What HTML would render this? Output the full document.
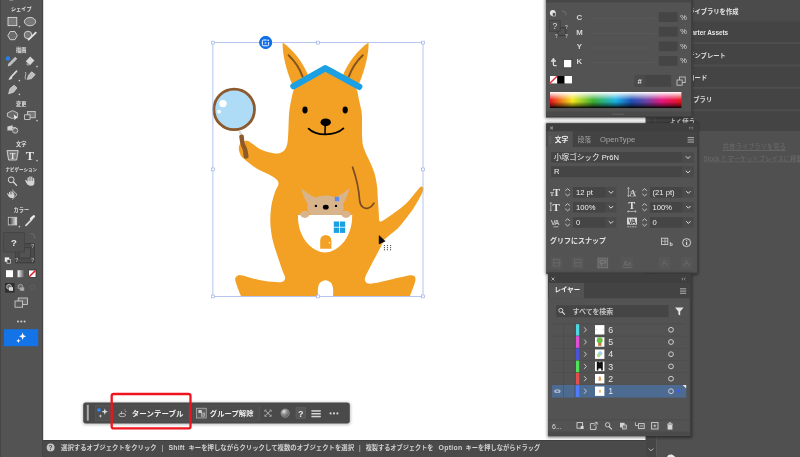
<!DOCTYPE html>
<html lang="ja">
<head>
<meta charset="utf-8">
<title>Illustrator</title>
<style>
html,body{margin:0;padding:0;background:#fff;overflow:hidden}
body{width:800px;height:457px;position:relative;font-family:"Liberation Sans","Noto Sans CJK JP",sans-serif}
svg{position:absolute;left:0;top:0;display:block;will-change:transform}
text{font-family:"Liberation Sans","Noto Sans CJK JP",sans-serif}
.ser{font-family:"Liberation Serif","Noto Serif CJK SC",serif}
</style>
</head>
<body>
<svg width="800" height="457" viewBox="0 0 800 457">
<defs>
<linearGradient id="spec" x1="0" y1="0" x2="1" y2="0">
<stop offset="0" stop-color="#e8141c"/>
<stop offset="0.17" stop-color="#f5e81c"/>
<stop offset="0.33" stop-color="#3bb035"/>
<stop offset="0.5" stop-color="#19b3e6"/>
<stop offset="0.62" stop-color="#1c4fb5"/>
<stop offset="0.73" stop-color="#6a44a8"/>
<stop offset="0.85" stop-color="#e6157d"/>
<stop offset="1" stop-color="#e8141c"/>
</linearGradient>
<linearGradient id="specv" x1="0" y1="0" x2="0" y2="1">
<stop offset="0" stop-color="#fff" stop-opacity="1"/>
<stop offset="0.5" stop-color="#fff" stop-opacity="0"/>
<stop offset="0.6" stop-color="#000" stop-opacity="0"/>
<stop offset="0.85" stop-color="#000" stop-opacity="0.5"/>
<stop offset="1" stop-color="#000" stop-opacity="1"/>
</linearGradient>
<linearGradient id="gradsw" x1="0" y1="0" x2="1" y2="0">
<stop offset="0" stop-color="#222"/><stop offset="1" stop-color="#eee"/>
</linearGradient>
<linearGradient id="gradsw2" x1="0" y1="0" x2="1" y2="0">
<stop offset="0" stop-color="#fff"/><stop offset="1" stop-color="#555"/>
</linearGradient>
<radialGradient id="globe" cx="0.35" cy="0.3" r="0.75"><stop offset="0" stop-color="#e0e0e0"/><stop offset="0.5" stop-color="#8c8c8c"/><stop offset="1" stop-color="#5a5a5a"/></radialGradient>
<filter id="sh" x="-10%" y="-10%" width="120%" height="125%">
<feGaussianBlur stdDeviation="1.6"/>
</filter>
</defs>

<!-- ============ CANVAS ============ -->
<rect x="0" y="0" width="800" height="457" fill="#ffffff"/>

<!-- ============ LIBRARIES PANEL (right, behind) ============ -->
<g id="libs">
<rect x="645.5" y="0" width="11" height="457" fill="#4d4d4d"/>
<rect x="656" y="0" width="144" height="457" fill="#505050"/>
<rect x="656" y="0" width="144" height="131" fill="#444444"/>
<rect x="656" y="0" width="144" height="21.6" fill="#4b4b4b"/>
<rect x="656" y="42.2" width="144" height="1.8" fill="#4e4e4e"/>
<rect x="656" y="64.6" width="144" height="1.8" fill="#4e4e4e"/>
<rect x="656" y="87.0" width="144" height="1.8" fill="#4e4e4e"/>
<rect x="656" y="109.4" width="144" height="1.8" fill="#4e4e4e"/>
<text x="738.5" y="13.6" font-size="6.3" fill="#e6e6e6" font-weight="700" text-anchor="end">ライブラリを作成</text>
<text x="728.2" y="35.4" font-size="6.4" fill="#e6e6e6" font-weight="700" text-anchor="end">Starter Assets</text>
<text x="725.8" y="57.6" font-size="6.3" fill="#dcdcdc" font-weight="700" text-anchor="end">テンプレート</text>
<text x="707.2" y="80.0" font-size="6.3" fill="#dcdcdc" font-weight="700" text-anchor="end">コード</text>
<text x="712.2" y="102.4" font-size="6.3" fill="#dcdcdc" font-weight="700" text-anchor="end">ライブラリ</text>
<rect x="649.6" y="118.6" width="5.4" height="4.6" fill="#464646"/>
<rect x="657.6" y="118.6" width="6.4" height="4.6" fill="#464646"/>
<text x="669.6" y="124.2" font-size="6.4" fill="#cfcfcf" font-weight="700">よく使う</text>
<text x="754.3" y="149.4" font-size="6.3" fill="#6c6c6c" text-anchor="middle" text-decoration="underline">共有ライブラリを見る</text>
<rect x="722.8" y="150.4" width="63" height="0.6" fill="#676767"/>
<text x="703.6" y="160.6" font-size="6.3" fill="#6c6c6c">Stock とマーケットプレイスに移動</text>
<rect x="703.6" y="161.6" width="97" height="0.6" fill="#676767"/>
<path d="M667,457 C667.8,454.8 670.6,454 672.8,455 L675.4,457Z" fill="#e8e8e8"/>
</g>

<!-- ============ STATUS BAR ============ -->
<g id="status">
<rect x="43" y="440" width="603" height="17" fill="#4a4a4a"/>
<rect x="43" y="440" width="603" height="0.8" fill="#3e3e3e"/>
<rect x="646" y="440" width="10" height="17" fill="#454545"/>
<rect x="656" y="436" width="1" height="21" fill="#5a5a5a"/>
<path d="M648.6,448.6 L651,450.8 L653.4,448.6" fill="none" stroke="#bdbdbd" stroke-width="0.9"/>
<circle cx="50.6" cy="447.4" r="3.9" fill="#c6c6c6"/>
<text x="50.6" y="449.8" font-size="6.6" fill="#4a4a4a" text-anchor="middle" font-weight="700">?</text>
<text x="61.1" y="449.8" font-size="6.3" fill="#d2d2d2" font-weight="700" textLength="95.6" lengthAdjust="spacingAndGlyphs">選択するオブジェクトをクリック</text>
<text x="161.8" y="449.8" font-size="6.3" fill="#d2d2d2" font-weight="700" textLength="1.2" lengthAdjust="spacingAndGlyphs">|</text>
<text x="168.5" y="449.8" font-size="6.9" fill="#d2d2d2" font-weight="700" textLength="16.0" lengthAdjust="spacing">Shift</text>
<text x="188.5" y="449.8" font-size="6.3" fill="#d2d2d2" font-weight="700" textLength="165.5" lengthAdjust="spacingAndGlyphs">キーを押しながらクリックして複数のオブジェクトを選択</text>
<text x="359.3" y="449.8" font-size="6.3" fill="#d2d2d2" font-weight="700" textLength="1.2" lengthAdjust="spacingAndGlyphs">|</text>
<text x="365.7" y="449.8" font-size="6.3" fill="#d2d2d2" font-weight="700" textLength="67.8" lengthAdjust="spacingAndGlyphs">複製するオブジェクトを</text>
<text x="438.5" y="449.8" font-size="6.9" fill="#d2d2d2" font-weight="700" textLength="23.8" lengthAdjust="spacing">Option</text>
<text x="465.5" y="449.8" font-size="6.3" fill="#d2d2d2" font-weight="700" textLength="74.8" lengthAdjust="spacingAndGlyphs">キーを押しながらドラッグ</text>
</g>

<!-- ============ LEFT TOOLBAR ============ -->
<g id="toolbar">
<rect x="0" y="0" width="43" height="457" fill="#535353"/>
<rect x="0" y="0" width="1" height="457" fill="#464646"/>
<rect x="42" y="0" width="1.2" height="457" fill="#454545"/>
<rect x="9.4" y="0" width="3.8" height="0.9" fill="#8c8c8c"/>
<text x="21.3" y="11.4" font-size="5.2" fill="#e2e2e2" text-anchor="middle" font-weight="700">シェイプ</text>
<rect x="8" y="17.4" width="8.8" height="8.2" fill="#777" stroke="#d8d8d8" stroke-width="0.9"/>
<rect x="18.7" y="25.9" width="1.4" height="1.4" fill="#cfcfcf"/>
<ellipse cx="30" cy="21.6" rx="5.6" ry="4.2" fill="#777" stroke="#d8d8d8" stroke-width="0.9"/>
<path d="M7.8,35.6 L10.2,31.5 L14.9,31.5 L17.3,35.6 L14.9,39.7 L10.2,39.7Z" fill="#6c6c6c" stroke="#d8d8d8" stroke-width="0.9"/>
<circle cx="28" cy="35" r="3.8" fill="#777" stroke="#d8d8d8" stroke-width="0.9"/>
<path d="M28.6,39.6 L35.8,32.6" stroke="#e6e6e6" stroke-width="1.8" stroke-linecap="round"/>
<text x="21.3" y="51.6" font-size="5.2" fill="#e2e2e2" text-anchor="middle" font-weight="700">描画</text>
<circle cx="8" cy="58.5" r="2.2" fill="#2680eb"/>
<path d="M15.2,57.2 L16.8,58.8 L10.4,65.2 L8.2,65.9 L8.8,63.7Z" fill="#bdbdbd" stroke="#d8d8d8" stroke-width="0.7" stroke-linejoin="round"/>
<path d="M30.2,56.6 L34.4,60.6 L30,65.2 L25.8,61.2Z" fill="#d6d6d6"/>
<path d="M27.6,62.9 L29.9,65.1 L27.8,65.8 L25.8,63.9Z" fill="#9a9a9a"/>
<rect x="36.3" y="65.8" width="1.4" height="1.4" fill="#cfcfcf"/>
<path d="M16.6,71.2 L11.4,76.6" stroke="#d8d8d8" stroke-width="1.7" stroke-linecap="round"/>
<path d="M11.2,76.2 C9.4,76.4 9.6,78.8 8.2,79.6 C10.4,80.2 12.6,79 12.2,77.2Z" fill="#d8d8d8"/>
<rect x="18.7" y="79.9" width="1.4" height="1.4" fill="#cfcfcf"/>
<path d="M31.6,71.8 L35.2,74.6 L31.6,78.6 L27.4,79.4 L28.4,75.4Z" fill="#bdbdbd" stroke="#d8d8d8" stroke-width="0.7" stroke-linejoin="round"/>
<path d="M25,72 C27.4,73.6 23.6,77.4 26,79.6" fill="none" stroke="#d8d8d8" stroke-width="0.8"/>
<path d="M14.2,85.2 L17,88 L13.6,92.2 L8.6,93.8 L10,88.6Z" fill="#bdbdbd" stroke="#d8d8d8" stroke-width="0.7" stroke-linejoin="round"/>
<rect x="18.7" y="93.7" width="1.4" height="1.4" fill="#cfcfcf"/>
<text x="21.3" y="105.9" font-size="5.2" fill="#e2e2e2" text-anchor="middle" font-weight="700">変更</text>
<path d="M7.4,113 L12.6,110.6 L17.6,113 L17.6,116.4 L12.4,118.6 L7.4,116.4Z" fill="#6a6a6a" stroke="#d8d8d8" stroke-width="0.8" stroke-linejoin="round"/>
<path d="M13.8,114.6 L18.2,118 L16,118.3 L14.6,120.2Z" fill="#eee"/>
<rect x="27.6" y="111.4" width="7.6" height="6.4" fill="#777" stroke="#d8d8d8" stroke-width="0.8"/>
<rect x="24.6" y="114.8" width="5.4" height="4.6" fill="#555" stroke="#d8d8d8" stroke-width="0.8"/>
<rect x="36.3" y="119.9" width="1.4" height="1.4" fill="#cfcfcf"/>
<path d="M7.4,126.4 L12.6,125.2 L12.6,130.6 L7.4,130.6Z" fill="#cfcfcf"/>
<circle cx="15.2" cy="130.6" r="2.6" fill="#6a6a6a" stroke="#d8d8d8" stroke-width="0.8"/>
<path d="M10.4,127.4 L15.6,127.4 L17.2,129" fill="none" stroke="#d8d8d8" stroke-width="0.8"/>
<text x="21.3" y="145.6" font-size="5.2" fill="#e2e2e2" text-anchor="middle" font-weight="700">文字</text>
<path d="M7,150.6 L18.2,150.6 L16.6,160 L8.6,160Z" fill="#777" stroke="#d8d8d8" stroke-width="0.9" stroke-linejoin="round"/>
<text x="12.6" y="158.6" font-size="8" fill="#e8e8e8" text-anchor="middle" class="ser" font-weight="700">T</text>
<text x="30" y="160" font-size="12.5" fill="#e4e4e4" text-anchor="middle" class="ser" font-weight="700">T</text>
<rect x="36.3" y="159.9" width="1.4" height="1.4" fill="#cfcfcf"/>
<text x="21.3" y="171.3" font-size="4.5" fill="#e2e2e2" text-anchor="middle" font-weight="700">ナビゲーション</text>
<circle cx="11.2" cy="179.8" r="2.9" fill="none" stroke="#d8d8d8" stroke-width="1"/>
<path d="M13.4,182 L16.6,185.4" stroke="#d8d8d8" stroke-width="1.3" stroke-linecap="round"/>
<path d="M28.2,182 V178 M30,181.6 V176.8 M31.8,181.6 V177.2 M33.6,182 V178.6" stroke="#d4d4d4" stroke-width="1.3" stroke-linecap="round"/>
<path d="M27.4,181 H34.3 V183.4 C34.3,186.4 28.6,186.6 27.4,184Z" fill="#d4d4d4"/>
<path d="M25.9,180.6 L27.8,183.8" stroke="#d4d4d4" stroke-width="1.4" stroke-linecap="round"/>
<path d="M12.2,189.8 L17,194.6 L12.2,199.4" fill="none" stroke="#d4d4d4" stroke-width="0.9" stroke-linejoin="round"/>
<path d="M9.6,195 V192.4 M11,194.6 V191.6 M12.4,194.8 V192 M13.7,195.2 V193" stroke="#d4d4d4" stroke-width="1" stroke-linecap="round"/>
<path d="M9,194.4 H14.3 V196 C14.3,198.6 10,198.8 9,196.6Z" fill="#d4d4d4"/>
<path d="M7.7,193.8 L9.2,196.4" stroke="#d4d4d4" stroke-width="1.1" stroke-linecap="round"/>
<text x="21.3" y="211.6" font-size="5.2" fill="#e2e2e2" text-anchor="middle" font-weight="700">カラー</text>
<rect x="8.3" y="217.3" width="8.4" height="7.6" fill="url(#gradsw)" stroke="#cfcfcf" stroke-width="0.8"/>
<rect x="18.7" y="225.9" width="1.4" height="1.4" fill="#cfcfcf"/>
<path d="M26,225.4 L31.6,219.6" stroke="#d8d8d8" stroke-width="1.8" stroke-linecap="round"/>
<path d="M31.2,218.8 L33.8,216.4" stroke="#e8e8e8" stroke-width="2.6" stroke-linecap="round"/>
<path d="M15.6,243.6 H34.4 V262.8 H15.6Z M18.9,247.7 V258.2 H30.6 V247.7Z" fill="#4c4c4c" fill-rule="evenodd" stroke="#3b3b3b" stroke-width="0.9"/>
<text x="32.8" y="248.0" font-size="5.6" fill="#a8a8a8" text-anchor="middle" font-weight="700">?</text>
<text x="16.8" y="262.4" font-size="5.6" fill="#a8a8a8" text-anchor="middle" font-weight="700">?</text>
<text x="32.8" y="262.4" font-size="5.6" fill="#a8a8a8" text-anchor="middle" font-weight="700">?</text>
<rect x="3.3" y="232.6" width="21.2" height="19.4" fill="#4f4f4f" stroke="#444" stroke-width="0.8"/>
<text x="14" y="246.4" font-size="9.6" fill="#e4e4e4" text-anchor="middle" font-weight="700">?</text>
<path d="M30.6,233.6 C33.6,233.4 35,235.2 34.6,238.4" fill="none" stroke="#707070" stroke-width="0.9"/>
<rect x="4.8" y="257.4" width="4.4" height="4.4" fill="#efefef"/>
<rect x="7" y="259.6" width="3.6" height="3.6" fill="#444" stroke="#ddd" stroke-width="0.7"/>
<rect x="6" y="270.2" width="7" height="7" fill="#fff"/>
<rect x="17.6" y="270.2" width="6.6" height="7" fill="url(#gradsw2)"/>
<rect x="28.6" y="270" width="7.4" height="7.4" fill="#fff" stroke="#333" stroke-width="0.8"/>
<path d="M29,277 L35.6,270.4" stroke="#e0242c" stroke-width="1.5"/>
<rect x="5" y="283" width="9.6" height="9.6" fill="#303030"/>
<circle cx="9" cy="286.8" r="2.4" fill="#666" stroke="#ddd" stroke-width="0.7"/>
<rect x="9" y="287.2" width="4" height="3.6" fill="#ddd"/>
<circle cx="20.4" cy="286.8" r="2.4" fill="#666" stroke="#bbb" stroke-width="0.7"/>
<rect x="20.2" y="287.4" width="4" height="3.4" fill="#aaa"/>
<circle cx="32.4" cy="287.4" r="2.4" fill="none" stroke="#666" stroke-width="0.7"/>
<rect x="18.2" y="298" width="9.2" height="6.4" fill="#6a6a6a" stroke="#d8d8d8" stroke-width="0.8"/>
<rect x="15" y="301" width="7.6" height="6.2" fill="#5a5a5a" stroke="#d8d8d8" stroke-width="0.8"/>
<circle cx="18.0" cy="321.4" r="1" fill="#d0d0d0"/>
<circle cx="21.3" cy="321.4" r="1" fill="#d0d0d0"/>
<circle cx="24.6" cy="321.4" r="1" fill="#d0d0d0"/>
<rect x="4" y="329.2" width="34.2" height="17" fill="#1473e6"/>
<path d="M22.6,332.4 L23.6,335.2 L26.2,336.2 L23.6,337.2 L22.6,340 L21.6,337.2 L19,336.2 L21.6,335.2Z" fill="#fff"/>
<path d="M18.4,338.6 L19,340.2 L20.6,340.8 L19,341.4 L18.4,343 L17.8,341.4 L16.2,340.8 L17.8,340.2Z" fill="#fff"/>
</g>

<!-- ============ KANGAROO ============ -->
<g id="roo">
<path d="M282.6,42.4 C282.4,54 285.6,68 292.4,85 L308.4,76 C303.4,63 293.6,50 282.6,42.4Z" fill="#F3A125"/>
<path d="M368.6,42.4 C368.8,54 365.4,68 358.6,85 L342.6,76 C347.6,63 357.4,50 368.6,42.4Z" fill="#F3A125"/>
<path d="M288.6,55.2 C293.6,60 299.4,67.6 302.6,76.6" fill="none" stroke="#82521f" stroke-width="1.9" stroke-linecap="round"/>
<path d="M362.8,55.2 C357.8,60 352,67.6 348.8,76.6" fill="none" stroke="#82521f" stroke-width="1.9" stroke-linecap="round"/>
<path d="M325.0,68.0 C320.3,70.7 301.7,81.3 297.0,84.0 C296.4,85.2 294.4,88.3 293.4,91.0 C292.4,93.7 291.8,97.0 291.2,100.0 C290.6,103.0 290.0,106.0 289.6,109.0 C289.2,112.0 289.0,113.8 288.8,118.0 C288.6,122.2 288.5,129.5 288.2,134.0 C287.9,138.5 287.9,142.1 287.0,145.0 C286.1,147.9 285.0,150.1 283.0,151.5 C281.0,152.9 278.5,153.8 275.0,153.5 C271.5,153.2 265.8,151.7 262.0,150.0 C258.2,148.3 254.4,145.0 252.0,143.5 C249.6,142.0 249.2,141.1 247.4,140.8 C245.7,140.6 242.9,140.9 241.5,142.0 C240.1,143.1 239.1,145.6 238.8,147.5 C238.6,149.4 239.3,151.8 240.0,153.5 C240.7,155.2 240.3,155.6 243.0,158.0 C245.7,160.4 252.0,165.5 256.2,168.2 C260.4,170.9 264.7,172.2 268.0,174.0 C271.3,175.8 274.2,177.3 276.0,179.0 C277.8,180.7 278.7,181.8 278.5,184.0 C278.3,186.2 276.2,188.5 275.0,192.0 C273.8,195.5 272.3,200.5 271.5,205.0 C270.7,209.5 270.4,214.5 270.3,219.0 C270.2,223.5 270.6,227.8 271.2,232.0 C271.8,236.2 272.3,238.9 273.7,244.0 C275.1,249.1 278.1,257.6 279.6,262.3 C281.2,267.0 282.1,269.4 283.0,272.0 C283.9,274.6 285.2,276.4 285.2,278.0 C285.2,279.6 284.2,280.8 283.0,281.5 C281.8,282.2 281.0,282.3 278.0,282.2 C275.0,282.1 269.3,281.7 265.0,281.0 C260.7,280.3 255.7,279.1 252.0,278.2 C248.3,277.3 245.3,276.1 243.0,275.6 C240.7,275.1 239.3,274.9 238.0,275.4 C236.7,275.9 235.5,277.2 235.2,278.5 C234.9,279.8 235.4,281.1 236.0,283.0 C236.6,284.9 237.7,287.8 238.5,290.0 C239.3,292.2 240.6,295.0 241.0,296.0 C253.8,296.0 305.2,296.0 318.0,296.0 C318.0,294.7 317.6,290.2 318.0,288.0 C318.4,285.8 319.1,283.9 320.3,282.6 C321.6,281.3 323.8,280.3 325.5,280.3 C327.2,280.3 329.4,281.3 330.7,282.6 C331.9,283.9 332.6,285.8 333.0,288.0 C333.4,290.2 333.0,294.7 333.0,296.0 C345.8,296.0 397.2,296.0 410.0,296.0 C410.5,294.7 412.1,290.5 413.0,288.0 C413.9,285.5 415.0,282.8 415.3,281.0 C415.6,279.2 415.6,277.9 415.0,277.0 C414.4,276.1 413.3,275.4 411.5,275.3 C409.7,275.2 408.1,275.6 404.0,276.5 C399.9,277.4 391.8,279.3 387.0,280.4 C382.2,281.5 378.1,282.5 375.0,283.0 C371.9,283.5 370.1,283.9 368.5,283.6 C366.9,283.3 365.7,282.2 365.2,281.0 C364.7,279.8 364.6,279.0 365.5,276.5 C366.4,274.0 368.9,269.3 370.7,265.9 C372.4,262.5 374.4,259.1 376.0,256.0 C377.6,252.9 379.0,250.3 380.4,247.6 C381.8,244.9 383.7,240.9 384.4,239.6 C385.5,238.6 389.0,235.7 391.3,233.8 C393.6,231.9 396.1,230.1 398.2,228.0 C400.3,225.9 402.3,223.2 404.0,221.0 C405.7,218.8 407.0,217.1 408.6,215.0 C410.2,212.9 411.7,211.1 413.4,208.4 C415.1,205.7 417.5,201.7 419.0,199.0 C420.5,196.3 421.9,193.8 422.6,192.0 C423.3,190.2 423.3,189.4 423.2,188.5 C423.1,187.6 422.6,187.0 422.0,186.8 C421.4,186.7 422.0,185.3 419.8,187.6 C417.6,189.9 412.1,197.2 409.0,200.5 C405.9,203.8 403.9,205.4 401.5,207.5 C399.1,209.6 396.7,211.1 394.3,212.8 C391.9,214.6 389.1,216.6 387.0,218.0 C384.9,219.4 382.8,220.9 381.5,221.3 C380.2,221.7 379.8,222.1 379.3,220.5 C378.8,218.9 378.9,215.2 378.7,211.8 C378.5,208.4 378.2,204.3 377.9,200.0 C377.6,195.7 377.6,190.7 377.0,186.0 C376.4,181.3 375.6,176.6 374.1,172.0 C372.6,167.4 369.9,162.1 368.2,158.3 C366.5,154.5 365.2,152.1 364.2,149.0 C363.2,145.9 362.7,145.7 362.3,140.0 C361.9,134.3 362.2,120.5 361.9,115.0 C361.6,109.5 361.1,109.7 360.6,107.0 C360.1,104.3 359.4,101.7 358.8,99.0 C358.2,96.3 358.0,93.5 357.2,91.0 C356.4,88.5 354.5,85.2 354.0,84.0 C349.2,81.3 329.8,70.7 325.0,68.0Z" fill="#F3A125"/>
<path d="M293.5,86.2 L325.3,68.3 L359.2,86.8" fill="none" stroke="#1ba0e4" stroke-width="6.4" stroke-linecap="round" stroke-linejoin="round"/>
<ellipse cx="305" cy="110" rx="2.6" ry="3.4" fill="#000"/>
<ellipse cx="345.2" cy="110" rx="2.6" ry="3.4" fill="#000"/>
<ellipse cx="325.7" cy="122.3" rx="5.2" ry="3.9" fill="#000"/>
<path d="M325.2,124 L325,134" stroke="#000" stroke-width="1.5" fill="none"/>
<path d="M308.6,128.6 C316,136.3 335,136.3 343.4,128.4" stroke="#000" stroke-width="1.8" fill="none" stroke-linecap="round"/>
<path d="M352.6,167.2 C356.5,178 359,192 359.6,200 C360.2,207 364.5,209.5 368.5,208 C371.5,207 373,205 374,203.2" stroke="#7a4a24" stroke-width="1.7" fill="none" stroke-linecap="round"/>
<path d="M300.9,187.9 C302.6,194 305,200.4 309,206 L316.5,198 C311,195.6 305.6,192 300.9,187.9Z" fill="#D8B48D"/>
<path d="M349.7,187.9 C348,194 345.6,200.4 341.6,206 L334.1,198 C339.6,195.6 345,192 349.7,187.9Z" fill="#D8B48D"/>
<ellipse cx="325.6" cy="207.4" rx="18.2" ry="12" fill="#D8B48D"/>
<path d="M297.9,215.0 C298.0,216.2 297.9,219.5 298.3,222.0 C298.7,224.5 299.1,227.3 300.0,230.0 C300.9,232.7 302.0,235.5 303.5,238.0 C305.0,240.5 306.8,242.9 309.0,245.0 C311.2,247.1 313.8,249.0 316.5,250.3 C319.2,251.6 322.2,252.6 325.0,252.6 C327.8,252.6 330.8,251.6 333.5,250.3 C336.2,249.0 338.8,247.1 341.0,245.0 C343.2,242.9 345.0,240.5 346.5,238.0 C348.0,235.5 349.1,232.7 350.0,230.0 C350.9,227.3 351.4,224.5 351.8,222.0 C352.2,219.5 352.1,216.2 352.2,215.0 C343.1,215.0 306.9,215.0 297.9,215.0Z" fill="#fff"/>
<ellipse cx="304.8" cy="214.3" rx="4.6" ry="3.6" fill="#D8B48D"/>
<ellipse cx="346" cy="214.3" rx="4.6" ry="3.6" fill="#D8B48D"/>
<ellipse cx="325.8" cy="207.2" rx="2.9" ry="2.4" fill="#000"/>
<circle cx="315.9" cy="205.9" r="1.2" fill="#000"/>
<circle cx="336" cy="205.9" r="1.2" fill="#000"/>
<rect x="333.8" y="221.5" width="5.3" height="5.3" fill="#1ba0e4"/>
<rect x="339.9" y="221.5" width="5.3" height="5.3" fill="#1ba0e4"/>
<rect x="333.8" y="227.6" width="5.3" height="5.3" fill="#1ba0e4"/>
<rect x="339.9" y="227.6" width="5.3" height="5.3" fill="#1ba0e4"/>
<path d="M320.2,248.7 V240.5 A5.6,5.6 0 0 1 331.4,240.5 V248.7Z" fill="#F3A125"/>
<circle cx="329.4" cy="242.8" r="0.8" fill="#fff"/>
<rect x="334.8" y="196.8" width="4.4" height="4.4" fill="#5b8def"/>
<circle cx="234.2" cy="109.4" r="20.3" fill="#AEDCF6" stroke="#8C5A2E" stroke-width="2.8"/>
<circle cx="223" cy="103.6" r="3.7" fill="#fff"/>
<circle cx="219" cy="111.6" r="1.9" fill="#fff"/>
<path d="M239.6,131.3 L241.4,135.2" stroke="#ddd" stroke-width="2.6"/>
<path d="M239.2,136.4 C239,134.6 242.6,133.6 243.6,135.2 C244.6,139 243.6,141.6 245.2,144.6 C246.8,147.6 247.4,149 247.8,151.4 L248.6,156.4 C248.8,158.6 244.6,159.6 243.8,157.6 C243,154 243.6,151.6 242.2,148.6 C240.6,145.4 240.2,143.6 239.8,140.6Z" fill="#8E5A2A"/>
</g>

<!-- ============ COLOR PANEL ============ -->
<g id="colorpanel">
<rect x="545" y="-4" width="147" height="122.5" fill="#000" opacity="0.45" filter="url(#sh)"/>
<rect x="546" y="0" width="147" height="117.4" fill="#3f3f3f"/>
<rect x="546" y="0" width="145" height="117" fill="#535353"/>
<rect x="546" y="0" width="145" height="2.4" fill="#474747"/>
<rect x="546" y="111.6" width="145" height="5.4" fill="#4a4a4a"/>
<rect x="546" y="116.2" width="145" height="0.9" fill="#3d3d3d"/>
<rect x="612" y="113.6" width="12" height="1.2" fill="#5c5c5c"/>
<circle cx="552.8" cy="13" r="2.9" fill="#e6e6e6"/>
<rect x="552.4" y="12.8" width="3.2" height="3.2" fill="#4a4a4a" stroke="#ddd" stroke-width="0.6"/>
<path d="M562,11.2 C564.6,10.8 566.2,12.4 566,15.4" fill="none" stroke="#787878" stroke-width="0.9"/>
<rect x="557.6" y="27.8" width="8" height="7.6" fill="none" stroke="#404040" stroke-width="1.6"/>
<text x="566.4" y="29.4" font-size="4.6" fill="#c8c8c8" text-anchor="middle" font-weight="700">?</text>
<text x="556.4" y="37.8" font-size="4.6" fill="#c8c8c8" text-anchor="middle" font-weight="700">?</text>
<text x="566.4" y="37.8" font-size="4.6" fill="#c8c8c8" text-anchor="middle" font-weight="700">?</text>
<rect x="549.6" y="20.4" width="10.6" height="10.8" fill="#505050" stroke="#3f3f3f" stroke-width="0.8"/>
<text x="554.9" y="29.2" font-size="8.4" fill="#e0e0e0" text-anchor="middle">?</text>
<text x="579.4" y="19.9" font-size="7.8" fill="#d6d6d6" text-anchor="middle" font-weight="700">C</text>
<rect x="590" y="18.4" width="64" height="0.7" fill="#5b5b5b"/>
<rect x="658.8" y="12.2" width="18.8" height="9.8" fill="#454545"/>
<text x="683.6" y="19.6" font-size="7.4" fill="#dcdcdc" text-anchor="middle">%</text>
<text x="579.4" y="34.5" font-size="7.8" fill="#d6d6d6" text-anchor="middle" font-weight="700">M</text>
<rect x="590" y="33.0" width="64" height="0.7" fill="#5b5b5b"/>
<rect x="658.8" y="26.8" width="18.8" height="9.8" fill="#454545"/>
<text x="683.6" y="34.2" font-size="7.4" fill="#dcdcdc" text-anchor="middle">%</text>
<text x="579.4" y="49.2" font-size="7.8" fill="#d6d6d6" text-anchor="middle" font-weight="700">Y</text>
<rect x="590" y="47.6" width="64" height="0.7" fill="#5b5b5b"/>
<rect x="658.8" y="41.4" width="18.8" height="9.8" fill="#454545"/>
<text x="683.6" y="48.8" font-size="7.4" fill="#dcdcdc" text-anchor="middle">%</text>
<text x="579.4" y="63.6" font-size="7.8" fill="#d6d6d6" text-anchor="middle" font-weight="700">K</text>
<rect x="590" y="62.2" width="64" height="0.7" fill="#5b5b5b"/>
<rect x="658.8" y="56.0" width="18.8" height="9.8" fill="#454545"/>
<text x="683.6" y="63.4" font-size="7.4" fill="#dcdcdc" text-anchor="middle">%</text>
<path d="M553.4,58.4 V64.6 C553.4,65.6 554.2,65.8 556.6,65.6 M551,61 H556" fill="none" stroke="#dcdcdc" stroke-width="1.3"/>
<path d="M551.8,60 L553.4,57.8 L555,60Z" fill="#dcdcdc"/>
<rect x="563.4" y="59.4" width="8.4" height="8.4" fill="#fff" stroke="#3a3a3a" stroke-width="0.8"/>
<rect x="550" y="76" width="7.2" height="7.4" fill="#fff"/>
<path d="M549.4,83.8 L557,76.2" stroke="#e0303a" stroke-width="1.4"/>
<rect x="557.4" y="76" width="6.9" height="7.4" fill="#000"/>
<rect x="564.6" y="76" width="7.4" height="7.4" fill="#fff"/>
<rect x="634.4" y="74.8" width="36.8" height="12" fill="#4a4a4a"/>
<rect x="645.4" y="75.2" width="25.6" height="11.2" fill="#454545"/>
<text x="639.6" y="84" font-size="7.8" fill="#e0e0e0" text-anchor="middle" font-weight="700">#</text>
<rect x="679.6" y="77" width="5.6" height="5.6" fill="none" stroke="#cfcfcf" stroke-width="0.8"/>
<rect x="677" y="80" width="5.2" height="5.2" fill="#535353" stroke="#cfcfcf" stroke-width="0.8"/>
<rect x="550" y="92" width="131.4" height="16" fill="url(#spec)"/>
<rect x="550" y="92" width="131.4" height="16" fill="url(#specv)"/>
</g>

<!-- ============ CHARACTER PANEL ============ -->
<g id="charpanel">
<rect x="545.6" y="122.6" width="152.4" height="152" fill="#000" opacity="0.5" filter="url(#sh)"/>
<rect x="546.4" y="123.6" width="152.2" height="150" fill="#3f3f3f"/>
<rect x="546.4" y="123.6" width="150.6" height="149.6" fill="#535353"/>
<rect x="546.4" y="123.6" width="150.6" height="23.4" fill="#434343"/>
<rect x="546.4" y="123.6" width="150.6" height="7.6" fill="#3f3f3f"/>
<path d="M550.2,126.6 L553,129.4 M553,126.6 L550.2,129.4" stroke="#c4c4c4" stroke-width="0.8"/>
<path d="M690.4,126.8 L689.2,128 L690.4,129.2 M692.8,126.8 L691.6,128 L692.8,129.2" stroke="#b0b0b0" stroke-width="0.7" fill="none"/>
<rect x="547.4" y="131.2" width="25.4" height="16" fill="#535353"/>
<rect x="549.6" y="136.4" width="1.6" height="0.9" fill="#6e6e6e"/>
<rect x="549.6" y="138.4" width="1.6" height="0.9" fill="#6e6e6e"/>
<rect x="549.6" y="140.4" width="1.6" height="0.9" fill="#6e6e6e"/>
<rect x="549.6" y="142.4" width="1.6" height="0.9" fill="#6e6e6e"/>
<text x="561.6" y="142.2" font-size="6.8" fill="#f2f2f2" text-anchor="middle" font-weight="700">文字</text>
<text x="584.4" y="142.2" font-size="6.6" fill="#a0a0a0" text-anchor="middle">段落</text>
<text x="617.6" y="142" font-size="7.6" fill="#a8a8a8" text-anchor="middle">OpenType</text>
<rect x="687.6" y="137.2" width="6.4" height="0.9" fill="#bdbdbd"/>
<rect x="687.6" y="139.4" width="6.4" height="0.9" fill="#bdbdbd"/>
<rect x="687.6" y="141.6" width="6.4" height="0.9" fill="#bdbdbd"/>
<rect x="551" y="152.0" width="143" height="10.6" fill="#454545"/>
<rect x="682" y="152.0" width="12" height="10.6" fill="#4b4b4b"/>
<text x="554" y="160.2" font-size="7.6" fill="#f0f0f0">小塚ゴシック Pr6N</text>
<path d="M686.1,156.6 L688.0,158.5 L689.9,156.6" fill="none" stroke="#e0e0e0" stroke-width="1" stroke-linecap="round" stroke-linejoin="round"/>
<rect x="551" y="166.2" width="143" height="11.0" fill="#454545"/>
<rect x="682" y="166.2" width="12" height="11.0" fill="#4b4b4b"/>
<text x="554" y="174.4" font-size="7.6" fill="#f0f0f0">R</text>
<path d="M686.1,171.0 L688.0,172.9 L689.9,171.0" fill="none" stroke="#e0e0e0" stroke-width="1" stroke-linecap="round" stroke-linejoin="round"/>
<path d="M565.6,190.5 L567.6,188.7 L569.6,190.5" fill="none" stroke="#cfcfcf" stroke-width="0.9" stroke-linecap="round" stroke-linejoin="round"/>
<path d="M565.6,194.1 L567.6,195.9 L569.6,194.1" fill="none" stroke="#cfcfcf" stroke-width="0.9" stroke-linecap="round" stroke-linejoin="round"/>
<rect x="573" y="187.1" width="43.4" height="10.4" fill="#4b4b4b"/>
<rect x="573" y="187.1" width="32.4" height="10.4" fill="#454545"/>
<text x="576" y="195.1" font-size="7.6" fill="#f0f0f0">12 pt</text>
<path d="M609.1,191.4 L611.0,193.3 L612.9,191.4" fill="none" stroke="#e0e0e0" stroke-width="1" stroke-linecap="round" stroke-linejoin="round"/>
<path d="M642.6,190.5 L644.6,188.7 L646.6,190.5" fill="none" stroke="#cfcfcf" stroke-width="0.9" stroke-linecap="round" stroke-linejoin="round"/>
<path d="M642.6,194.1 L644.6,195.9 L646.6,194.1" fill="none" stroke="#cfcfcf" stroke-width="0.9" stroke-linecap="round" stroke-linejoin="round"/>
<rect x="650" y="187.1" width="43.8" height="10.4" fill="#4b4b4b"/>
<rect x="650" y="187.1" width="32.4" height="10.4" fill="#454545"/>
<text x="652.6" y="195.1" font-size="7.6" fill="#f0f0f0">(21 pt)</text>
<path d="M686.5,191.4 L688.4,193.3 L690.3,191.4" fill="none" stroke="#e0e0e0" stroke-width="1" stroke-linecap="round" stroke-linejoin="round"/>
<path d="M565.6,205.4 L567.6,203.6 L569.6,205.4" fill="none" stroke="#cfcfcf" stroke-width="0.9" stroke-linecap="round" stroke-linejoin="round"/>
<path d="M565.6,209.0 L567.6,210.8 L569.6,209.0" fill="none" stroke="#cfcfcf" stroke-width="0.9" stroke-linecap="round" stroke-linejoin="round"/>
<rect x="573" y="202.0" width="43.4" height="10.4" fill="#4b4b4b"/>
<rect x="573" y="202.0" width="32.4" height="10.4" fill="#454545"/>
<text x="576" y="210.0" font-size="7.6" fill="#f0f0f0">100%</text>
<path d="M609.1,206.3 L611.0,208.2 L612.9,206.3" fill="none" stroke="#e0e0e0" stroke-width="1" stroke-linecap="round" stroke-linejoin="round"/>
<path d="M642.6,205.4 L644.6,203.6 L646.6,205.4" fill="none" stroke="#cfcfcf" stroke-width="0.9" stroke-linecap="round" stroke-linejoin="round"/>
<path d="M642.6,209.0 L644.6,210.8 L646.6,209.0" fill="none" stroke="#cfcfcf" stroke-width="0.9" stroke-linecap="round" stroke-linejoin="round"/>
<rect x="650" y="202.0" width="43.8" height="10.4" fill="#4b4b4b"/>
<rect x="650" y="202.0" width="32.4" height="10.4" fill="#454545"/>
<text x="652.6" y="210.0" font-size="7.6" fill="#f0f0f0">100%</text>
<path d="M686.5,206.3 L688.4,208.2 L690.3,206.3" fill="none" stroke="#e0e0e0" stroke-width="1" stroke-linecap="round" stroke-linejoin="round"/>
<path d="M565.6,220.6 L567.6,218.8 L569.6,220.6" fill="none" stroke="#cfcfcf" stroke-width="0.9" stroke-linecap="round" stroke-linejoin="round"/>
<path d="M565.6,224.2 L567.6,226.0 L569.6,224.2" fill="none" stroke="#cfcfcf" stroke-width="0.9" stroke-linecap="round" stroke-linejoin="round"/>
<rect x="573" y="217.2" width="43.4" height="10.4" fill="#4b4b4b"/>
<rect x="573" y="217.2" width="32.4" height="10.4" fill="#454545"/>
<text x="576" y="225.2" font-size="7.6" fill="#f0f0f0">0</text>
<path d="M609.1,221.5 L611.0,223.4 L612.9,221.5" fill="none" stroke="#e0e0e0" stroke-width="1" stroke-linecap="round" stroke-linejoin="round"/>
<path d="M642.6,220.6 L644.6,218.8 L646.6,220.6" fill="none" stroke="#cfcfcf" stroke-width="0.9" stroke-linecap="round" stroke-linejoin="round"/>
<path d="M642.6,224.2 L644.6,226.0 L646.6,224.2" fill="none" stroke="#cfcfcf" stroke-width="0.9" stroke-linecap="round" stroke-linejoin="round"/>
<rect x="650" y="217.2" width="43.8" height="10.4" fill="#4b4b4b"/>
<rect x="650" y="217.2" width="32.4" height="10.4" fill="#454545"/>
<text x="652.6" y="225.2" font-size="7.6" fill="#f0f0f0">0</text>
<path d="M686.5,221.5 L688.4,223.4 L690.3,221.5" fill="none" stroke="#e0e0e0" stroke-width="1" stroke-linecap="round" stroke-linejoin="round"/>
<text x="550" y="196" font-size="6" fill="#dcdcdc" class="ser" font-weight="700">T</text>
<text x="553" y="196" font-size="10.5" fill="#e4e4e4" class="ser" font-weight="700">T</text>
<text x="632.8" y="196" font-size="9" fill="#d0d0d0" text-anchor="middle" class="ser" font-weight="700">A</text>
<path d="M628.4,187.4 V196.6 M627.4,188.6 L628.4,187.4 L629.4,188.6 M627.4,195.4 L628.4,196.6 L629.4,195.4" stroke="#cfcfcf" stroke-width="0.7" fill="none"/>
<path d="M629.8,191.8 H636.8 M629.8,196.4 H636.8" stroke="#bdbdbd" stroke-width="0.6" stroke-dasharray="1 0.8"/>
<path d="M550.8,202.6 V210.8 M549.9,203.6 L550.8,202.6 L551.7,203.6 M549.9,209.8 L550.8,210.8 L551.7,209.8" stroke="#d4d4d4" stroke-width="0.7" fill="none"/>
<text x="552.4" y="210.8" font-size="11" fill="#e4e4e4" class="ser" font-weight="700">T</text>
<text x="631.8" y="209" font-size="10" fill="#e4e4e4" text-anchor="middle" class="ser" font-weight="700">T</text>
<path d="M627.6,211.4 H636.2 M628.6,210.5 L627.6,211.4 L628.6,212.3 M635.2,210.5 L636.2,211.4 L635.2,212.3" stroke="#d4d4d4" stroke-width="0.7" fill="none"/>
<text x="554.8" y="225" font-size="7.4" fill="#c0c0c0" text-anchor="middle" font-weight="700" letter-spacing="-0.8">VA</text>
<path d="M553.4,226.8 H558.4" stroke="#c0c0c0" stroke-width="0.8"/>
<rect x="627" y="217.6" width="10" height="7" fill="#d6d6d6"/>
<text x="632" y="223.8" font-size="6.4" fill="#4a4a4a" text-anchor="middle" font-weight="700" letter-spacing="-0.6">VA</text>
<path d="M627.2,226.8 H636.8" stroke="#cfcfcf" stroke-width="0.8" stroke-dasharray="1.6 0.9"/>
<text x="550" y="243.2" font-size="7" fill="#e4e4e4" font-weight="700" textLength="56" lengthAdjust="spacingAndGlyphs">グリフにスナップ</text>
<rect x="661.6" y="238.2" width="6.2" height="6.2" fill="none" stroke="#dcdcdc" stroke-width="0.8"/>
<path d="M661.6,241.2 H667.8 M665,238.2 V244.4" stroke="#dcdcdc" stroke-width="0.6"/>
<text x="669.4" y="245.6" font-size="5.4" fill="#dcdcdc" font-weight="700">b</text>
<circle cx="686.6" cy="242.6" r="4" fill="none" stroke="#e0e0e0" stroke-width="0.9"/>
<path d="M686.6,240.2 V240.9 M686.6,241.8 V245" stroke="#e0e0e0" stroke-width="1.1"/>
<rect x="550.6" y="257" width="12" height="12" fill="#575757" rx="1"/>
<rect x="571.8" y="257" width="12" height="12" fill="#575757" rx="1"/>
<rect x="596.8" y="257" width="12" height="12" fill="#575757" rx="1"/>
<rect x="621.4" y="257" width="12" height="12" fill="#575757" rx="1"/>
<rect x="658.6" y="257" width="12" height="12" fill="#575757" rx="1"/>
<rect x="680.6" y="257" width="12" height="12" fill="#575757" rx="1"/>
<rect x="553.4" y="259.6" width="6.4" height="6.4" fill="none" stroke="#6a6a6a" stroke-width="0.8"/>
<path d="M553.4,262.8 H559.8" stroke="#6e6e6e" stroke-width="0.8"/>
<rect x="574.6" y="259.6" width="6.4" height="6.4" fill="none" stroke="#6a6a6a" stroke-width="0.8"/>
<path d="M574.6,262.8 H581.0" stroke="#6e6e6e" stroke-width="0.8"/>
<rect x="598" y="258.2" width="9.6" height="9.6" fill="#616161" stroke="#7a7a7a" stroke-width="0.8"/>
<path d="M600,260.4 H605.6 V263 H600Z M601.4,263 V265.8" stroke="#8a8a8a" stroke-width="0.7" fill="none"/>
<text x="627.4" y="265.8" font-size="7" fill="#747474" text-anchor="middle">Ax</text>
<path d="M623,267.4 H632" stroke="#707070" stroke-width="0.7"/>
<text x="664.6" y="266" font-size="8.4" fill="#6c6c6c" text-anchor="middle">A</text>
<text x="686.6" y="266" font-size="8.4" fill="#6c6c6c" text-anchor="middle">A</text>
</g>

<!-- ============ LAYERS PANEL ============ -->
<g id="layers">
<rect x="547.4" y="273.6" width="144.6" height="164" fill="#000" opacity="0.5" filter="url(#sh)"/>
<rect x="546.4" y="272.6" width="150.8" height="1.2" fill="#3c3c3c"/>
<rect x="548" y="274" width="143.6" height="162.2" fill="#3f3f3f"/>
<rect x="548" y="274" width="141.8" height="161.8" fill="#535353"/>
<rect x="548" y="274" width="141.8" height="24.2" fill="#434343"/>
<rect x="548" y="274" width="141.8" height="9" fill="#3f3f3f"/>
<path d="M551.6,277.6 L554.4,280.4 M554.4,277.6 L551.6,280.4" stroke="#c4c4c4" stroke-width="0.8"/>
<path d="M683,277.8 L681.8,279 L683,280.2 M685.4,277.8 L684.2,279 L685.4,280.2" stroke="#b0b0b0" stroke-width="0.7" fill="none"/>
<rect x="548.8" y="283" width="35.2" height="15.4" fill="#535353"/>
<text x="554.6" y="292.4" font-size="6.8" fill="#f2f2f2" font-weight="700" textLength="25.6" lengthAdjust="spacingAndGlyphs">レイヤー</text>
<rect x="680" y="288.4" width="6.2" height="0.9" fill="#bdbdbd"/>
<rect x="680" y="290.6" width="6.2" height="0.9" fill="#bdbdbd"/>
<rect x="680" y="292.8" width="6.2" height="0.9" fill="#bdbdbd"/>
<rect x="556" y="305.2" width="112.4" height="12" fill="#454545"/>
<circle cx="560.8" cy="310.4" r="2" fill="none" stroke="#d8d8d8" stroke-width="0.9"/>
<path d="M562.3,312 L564.6,314.4" stroke="#d8d8d8" stroke-width="1.1" stroke-linecap="round"/>
<text x="572.6" y="313.8" font-size="6.8" fill="#c4c4c4" font-weight="700" textLength="40.6" lengthAdjust="spacingAndGlyphs">すべてを検索</text>
<path d="M675,307.4 H683.6 L680.2,311.4 V315.6 L678.4,314.4 V311.4Z" fill="#e4e4e4"/>
<rect x="552" y="335.8" width="134" height="0.6" fill="#4c4c4c"/>
<rect x="576" y="324.0" width="3.2" height="11.6" fill="#4dd7e4"/>
<path d="M584.4,327.6 L586.4,329.8 L584.4,332.0" fill="none" stroke="#d4d4d4" stroke-width="0.9" stroke-linecap="round" stroke-linejoin="round"/>
<rect x="595" y="325.1" width="9.4" height="9.4" fill="#fff"/>
<text x="610.6" y="332.9" font-size="8.8" fill="#e8e8e8" text-anchor="middle">6</text>
<circle cx="671" cy="329.8" r="2.4" fill="none" stroke="#cfcfcf" stroke-width="1"/>
<rect x="552" y="348.0" width="134" height="0.6" fill="#4c4c4c"/>
<rect x="576" y="336.2" width="3.2" height="11.6" fill="#e24fd6"/>
<path d="M584.4,339.8 L586.4,342.0 L584.4,344.2" fill="none" stroke="#d4d4d4" stroke-width="0.9" stroke-linecap="round" stroke-linejoin="round"/>
<rect x="595" y="337.3" width="9.4" height="9.4" fill="#fff"/>
<text x="610.6" y="345.1" font-size="8.8" fill="#e8e8e8" text-anchor="middle">5</text>
<circle cx="671" cy="342.0" r="2.4" fill="none" stroke="#cfcfcf" stroke-width="1"/>
<rect x="552" y="360.2" width="134" height="0.6" fill="#4c4c4c"/>
<rect x="576" y="348.4" width="3.2" height="11.6" fill="#4a52d8"/>
<path d="M584.4,352.0 L586.4,354.2 L584.4,356.4" fill="none" stroke="#d4d4d4" stroke-width="0.9" stroke-linecap="round" stroke-linejoin="round"/>
<rect x="595" y="349.5" width="9.4" height="9.4" fill="#fff"/>
<text x="610.6" y="357.3" font-size="8.8" fill="#e8e8e8" text-anchor="middle">4</text>
<circle cx="671" cy="354.2" r="2.4" fill="none" stroke="#cfcfcf" stroke-width="1"/>
<rect x="552" y="372.4" width="134" height="0.6" fill="#4c4c4c"/>
<rect x="576" y="360.6" width="3.2" height="11.6" fill="#4fe25a"/>
<path d="M584.4,364.2 L586.4,366.4 L584.4,368.6" fill="none" stroke="#d4d4d4" stroke-width="0.9" stroke-linecap="round" stroke-linejoin="round"/>
<rect x="595" y="361.7" width="9.4" height="9.4" fill="#fff"/>
<text x="610.6" y="369.5" font-size="8.8" fill="#e8e8e8" text-anchor="middle">3</text>
<circle cx="671" cy="366.4" r="2.4" fill="none" stroke="#cfcfcf" stroke-width="1"/>
<rect x="552" y="384.7" width="134" height="0.6" fill="#4c4c4c"/>
<rect x="576" y="372.9" width="3.2" height="11.6" fill="#e24f4f"/>
<path d="M584.4,376.5 L586.4,378.7 L584.4,380.9" fill="none" stroke="#d4d4d4" stroke-width="0.9" stroke-linecap="round" stroke-linejoin="round"/>
<rect x="595" y="374.0" width="9.4" height="9.4" fill="#fff"/>
<text x="610.6" y="381.8" font-size="8.8" fill="#e8e8e8" text-anchor="middle">2</text>
<circle cx="671" cy="378.7" r="2.4" fill="none" stroke="#cfcfcf" stroke-width="1"/>
<rect x="552" y="385" width="134.2" height="12.6" fill="#4d6a91"/>
<rect x="576" y="385.4" width="3.2" height="11.6" fill="#4f7cff"/>
<path d="M584.4,389.0 L586.4,391.2 L584.4,393.4" fill="none" stroke="#d4d4d4" stroke-width="0.9" stroke-linecap="round" stroke-linejoin="round"/>
<rect x="595" y="386.5" width="9.4" height="9.4" fill="#fff"/>
<text x="610.6" y="394.3" font-size="8.8" fill="#e8e8e8" text-anchor="middle">1</text>
<circle cx="671" cy="391.2" r="2.4" fill="none" stroke="#cfcfcf" stroke-width="1"/>
<rect x="563.4" y="323.6" width="0.5" height="74" fill="#4b4b4b"/>
<rect x="574.6" y="323.6" width="0.5" height="74" fill="#4b4b4b"/>
<rect x="552" y="323.6" width="134" height="0.6" fill="#4c4c4c"/>
<path d="M595.4,329.4 H597 M602.6,329.4 H604" stroke="#bbb" stroke-width="0.6"/>
<circle cx="599.7" cy="340.2" r="3" fill="#6cc04a"/>
<rect x="598.2" y="343" width="3.2" height="2.8" fill="#c8742e"/>
<circle cx="600.2" cy="353.4" r="2.2" fill="#9fd3f0"/>
<circle cx="598.6" cy="355.4" r="1.8" fill="#b6dd7a"/>
<path d="M596.8,362.2 L598,361.6 L599.8,362.4 L601.6,361.6 L602.8,362.2 V370.4 H601.2 V368.6 H598.4 V370.4 H596.8Z" fill="#111"/>
<path d="M598.8,376.4 L600.6,376.6 L601.4,380.4 L598.6,381Z" fill="#e2a15a"/>
<rect x="599.2" y="389.8" width="1.5" height="2.8" fill="#f3a93a"/>
<ellipse cx="557.4" cy="391.2" rx="3.2" ry="1.9" fill="#aab6c8"/>
<circle cx="557.4" cy="391.2" r="1" fill="#4d6a91"/>
<rect x="676.8" y="389.4" width="3.2" height="3.2" fill="#3b5bff"/>
<path d="M682.6,385 H686.2 V388.6Z" fill="#e8e8e8"/>
<rect x="548" y="431.4" width="141.8" height="4.4" fill="#4b4b4b"/>
<rect x="548" y="419.6" width="141.8" height="0.6" fill="#494949"/>
<text x="552" y="428.8" font-size="7" fill="#dcdcdc">6...</text>
<rect x="577" y="422.6" width="5.6" height="5.6" fill="none" stroke="#d4d4d4" stroke-width="0.9"/>
<rect x="580.6" y="426" width="3" height="3" fill="#d4d4d4"/>
<path d="M594.6,423.6 H590.4 V429.4 H596 V425.6" fill="none" stroke="#d4d4d4" stroke-width="0.9"/>
<path d="M593.6,426 L597,422.6 M594.8,422.4 H597.2 V424.8" fill="none" stroke="#d4d4d4" stroke-width="0.8"/>
<circle cx="607.6" cy="424.8" r="2.2" fill="none" stroke="#d4d4d4" stroke-width="0.9"/>
<path d="M609.2,426.6 L611.6,429.2" stroke="#d4d4d4" stroke-width="1.1" stroke-linecap="round"/>
<rect x="620" y="422.8" width="4.6" height="4.6" fill="#d4d4d4"/>
<rect x="622.4" y="425" width="4" height="4" fill="#777" stroke="#d4d4d4" stroke-width="0.7"/>
<rect x="638.6" y="423.6" width="5.6" height="5" fill="none" stroke="#d4d4d4" stroke-width="0.9"/>
<path d="M635.4,422.4 V425.6 H638.4 M640,426 H643" fill="none" stroke="#d4d4d4" stroke-width="0.8"/>
<rect x="651.6" y="422.6" width="6.4" height="6.4" fill="none" stroke="#d4d4d4" stroke-width="0.9"/>
<path d="M653.4,425.8 H656.2 M654.8,424.4 V427.2" stroke="#d4d4d4" stroke-width="0.8"/>
<path d="M667,424.2 H673 M669,424.2 V422.8 H671 V424.2" fill="none" stroke="#d4d4d4" stroke-width="0.9"/>
<path d="M667.6,425 H672.4 V429.6 H667.6Z" fill="#d4d4d4"/>
</g>

<!-- ============ CONTEXT BAR ============ -->
<g id="ctxbar">
<rect x="212.9" y="42.6" width="210.1" height="253.8" fill="none" stroke="#9fb1ea" stroke-width="0.75"/>
<rect x="211.5" y="41.2" width="2.8" height="2.8" fill="#fff" stroke="#9fb1ea" stroke-width="0.7"/>
<rect x="316.6" y="41.2" width="2.8" height="2.8" fill="#fff" stroke="#9fb1ea" stroke-width="0.7"/>
<rect x="421.6" y="41.2" width="2.8" height="2.8" fill="#fff" stroke="#9fb1ea" stroke-width="0.7"/>
<rect x="211.5" y="168.0" width="2.8" height="2.8" fill="#fff" stroke="#9fb1ea" stroke-width="0.7"/>
<rect x="421.6" y="168.0" width="2.8" height="2.8" fill="#fff" stroke="#9fb1ea" stroke-width="0.7"/>
<rect x="211.5" y="295.0" width="2.8" height="2.8" fill="#fff" stroke="#9fb1ea" stroke-width="0.7"/>
<rect x="316.6" y="295.0" width="2.8" height="2.8" fill="#fff" stroke="#9fb1ea" stroke-width="0.7"/>
<rect x="421.6" y="295.0" width="2.8" height="2.8" fill="#fff" stroke="#9fb1ea" stroke-width="0.7"/>
<circle cx="265.7" cy="42.5" r="6.4" fill="#1473e6"/>
<circle cx="265.6" cy="42.4" r="6.3" fill="#0f6fe8"/>
<path d="M266.6,40 H263.6 A1.2,1.2 0 0 0 262.4,41.2 V44.6 A1.2,1.2 0 0 0 263.6,45.8 H267.4 A1.2,1.2 0 0 0 268.6,44.6 V42.2" fill="none" stroke="#fff" stroke-width="1"/>
<circle cx="265.5" cy="43" r="1.05" fill="#9cc6ff"/>
<circle cx="268.2" cy="40.2" r="0.8" fill="#fff"/>
<path d="M379.1,235.6 L379.1,243.9 L385.2,241.2Z" fill="#0a0a0a" stroke="#0a0a0a" stroke-width="0.5" stroke-linejoin="round"/>
<rect x="383.9" y="245.0" width="1.1" height="1.1" fill="#555"/>
<rect x="383.9" y="247.1" width="1.1" height="1.1" fill="#555"/>
<rect x="383.9" y="249.2" width="1.1" height="1.1" fill="#555"/>
<rect x="386.9" y="245.0" width="1.1" height="1.1" fill="#555"/>
<rect x="386.9" y="247.1" width="1.1" height="1.1" fill="#555"/>
<rect x="386.9" y="249.2" width="1.1" height="1.1" fill="#555"/>
<rect x="390.0" y="245.0" width="1.1" height="1.1" fill="#555"/>
<rect x="390.0" y="247.1" width="1.1" height="1.1" fill="#555"/>
<rect x="390.0" y="249.2" width="1.1" height="1.1" fill="#555"/>
<rect x="82.6" y="402.4" width="268" height="22.4" rx="3" fill="#000" opacity="0.25" filter="url(#sh)"/>
<rect x="83.2" y="402.6" width="266.6" height="20.8" rx="2.6" fill="#4a4a4a"/>
<rect x="86.8" y="404.8" width="2" height="15.8" fill="#ababab"/>
<rect x="95.6" y="405.4" width="14" height="15.4" fill="#4f4f4f" stroke="#5c5c5c" stroke-width="0.6"/>
<circle cx="99" cy="410" r="1.8" fill="#2c8cff"/>
<path d="M104.8,408.4 L105.6,410.8 L108,411.8 L105.6,412.6 L104.8,415 L104,412.6 L101.6,411.8 L104,410.8Z" fill="#e0e0e0"/>
<path d="M100.4,414.2 L100.9,415.6 L102.2,416.1 L100.9,416.6 L100.4,418 L99.9,416.6 L98.6,416.1 L99.9,415.6Z" fill="#d0d0d0"/>
<rect x="113.4" y="405.2" width="75.6" height="15.8" rx="1.5" fill="#4d4d4d" stroke="#585858" stroke-width="0.6"/>
<rect x="193.4" y="405.2" width="64.6" height="15.8" rx="1.5" fill="#4d4d4d" stroke="#585858" stroke-width="0.6"/>
<ellipse cx="122.2" cy="415" rx="3.4" ry="1.7" fill="none" stroke="#cfcfcf" stroke-width="0.8"/>
<path d="M121.4,414.4 L121.4,411.2 M124.2,410.4 L125.2,409.4 M125,411.6 H126.4" stroke="#cfcfcf" stroke-width="0.8" fill="none"/>
<text x="131.8" y="416" font-size="7.4" fill="#f0f0f0" font-weight="700" textLength="51.6" lengthAdjust="spacingAndGlyphs">ターンテーブル</text>
<rect x="196.6" y="408.2" width="9.6" height="9.8" fill="#5c5c5c" stroke="#bdbdbd" stroke-width="0.7"/>
<rect x="198.4" y="410" width="3.4" height="3" fill="#d0d0d0"/>
<rect x="201.4" y="413" width="3.4" height="3.2" fill="#888" stroke="#d0d0d0" stroke-width="0.5"/>
<text x="209.8" y="416" font-size="7.4" fill="#f0f0f0" font-weight="700" textLength="43.8" lengthAdjust="spacingAndGlyphs">グループ解除</text>
<rect x="259.4" y="405.4" width="0.7" height="15.4" fill="#5e5e5e"/>
<path d="M265.4,410.6 L270.6,415.8 M270.6,410.6 L265.4,415.8" stroke="#bdbdbd" stroke-width="0.9"/>
<path d="M264.8,410 H266.6 M264.8,410 V411.8 M271.2,410 H269.4 M271.2,410 V411.8 M264.8,416.4 H266.6 M264.8,416.4 V414.6 M271.2,416.4 H269.4 M271.2,416.4 V414.6" stroke="#bdbdbd" stroke-width="0.7"/>
<circle cx="285.2" cy="413.2" r="4.2" fill="url(#globe)" stroke="#9a9a9a" stroke-width="0.6"/>
<rect x="296" y="407.6" width="9.6" height="11" fill="#575757" stroke="#626262" stroke-width="0.6"/>
<text x="300.8" y="416.6" font-size="9" fill="#e6e6e6" text-anchor="middle" font-weight="700">?</text>
<rect x="311.4" y="410.2" width="9.4" height="1.5" fill="#d6d6d6"/>
<rect x="311.4" y="413.0" width="9.4" height="1.5" fill="#d6d6d6"/>
<rect x="311.4" y="415.8" width="9.4" height="1.5" fill="#d6d6d6"/>
<circle cx="330.6" cy="413.4" r="1.05" fill="#d6d6d6"/>
<circle cx="334.0" cy="413.4" r="1.05" fill="#d6d6d6"/>
<circle cx="337.4" cy="413.4" r="1.05" fill="#d6d6d6"/>
<rect x="111.7" y="394" width="78.8" height="34.4" rx="2" fill="none" stroke="#f0141e" stroke-width="2.3"/>
</g>

</svg>
</body>
</html>
